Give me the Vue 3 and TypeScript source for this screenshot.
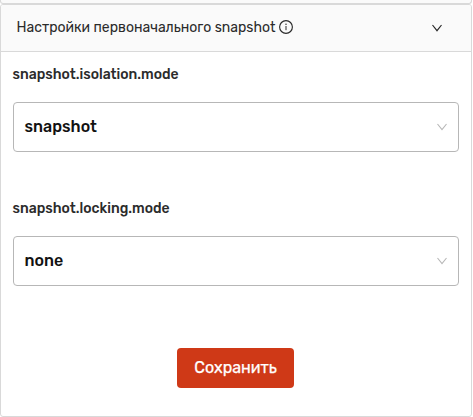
<script setup lang="ts">
import { reactive, ref } from 'vue'

interface Setting {
  key: string
  value: string
}

const open = ref(true)
const settings = reactive<Setting[]>([
  { key: 'snapshot.isolation.mode', value: 'snapshot' },
  { key: 'snapshot.locking.mode', value: 'none' },
])
</script>

<template>
  <div class="collapse">
    <div class="previous"></div>
    <section class="panel">
      <header class="header" @click="open = !open">
        <span class="title">Настройки первоначального snapshot</span>
        <svg class="info" viewBox="0 0 14 14" fill="none" stroke="currentColor">
          <circle cx="7" cy="7" r="6.4" stroke-width="1.15" />
          <path d="M7 6V10.2" stroke-width="1" />
          <circle cx="7" cy="4.2" r="0.75" fill="currentColor" stroke="none" />
        </svg>
        <svg class="arrow" viewBox="0 0 10 8" fill="none" stroke="currentColor">
          <path d="M0.5 1L5 6.7L9.5 1" stroke-width="1.2" />
        </svg>
      </header>
      <div v-if="open" class="body">
        <div v-for="s in settings" :key="s.key" class="field">
          <div class="label">{{ s.key }}</div>
          <div class="select">
            <span class="value">{{ s.value }}</span>
            <svg class="caret" viewBox="0 0 10 8" fill="none" stroke="currentColor">
              <path d="M0.5 1L5 6.7L9.5 1" stroke-width="1.1" />
            </svg>
          </div>
        </div>
        <button class="save" type="button">Сохранить</button>
      </div>
    </section>
  </div>
</template>

<style>
body {
  background: #fff;
}
</style>

<style scoped>
.collapse {
  box-sizing: border-box;
  width: 472px;
  height: 417px;
  display: flex;
  flex-direction: column;
  font-family: Rubik, Roboto, sans-serif;
  color: #2b2b2b;
}
.previous {
  box-sizing: border-box;
  flex: none;
  height: 4px;
  background: #fafafa;
  border: 1px solid #d9d9d9;
  border-top: 0;
  border-radius: 0 0 3px 3px;
}
.panel {
  box-sizing: border-box;
  flex: 1;
  border: 1px solid #d9d9d9;
  border-radius: 3px;
  overflow: hidden;
}
.header {
  box-sizing: border-box;
  height: 47px;
  display: flex;
  align-items: center;
  padding: 0 29px 0 15.6px;
  background: #fafafa;
  border-bottom: 1px solid #d9d9d9;
  font-size: 14px;
  line-height: 22px;
  cursor: pointer;
}
.title {
  white-space: nowrap;
}
.info {
  width: 14px;
  height: 14px;
  margin: 0 0 2px 3.6px;
}
.arrow {
  width: 10px;
  height: 8px;
  margin-left: auto;
}
.body {
  display: flex;
  flex-direction: column;
  padding: 12px 12px 0;
}
.field {
  height: 134px;
}
.label {
  height: 22px;
  margin: 0 0 16px -0.5px;
  font-size: 14px;
  line-height: 22px;
  font-weight: 500;
}
.select {
  box-sizing: border-box;
  height: 50px;
  display: flex;
  align-items: center;
  justify-content: space-between;
  padding: 0 11px 0 10.6px;
  border: 1px solid #b7b7b7;
  border-radius: 4px;
}
.value {
  font-size: 16px;
  line-height: 24px;
  font-weight: 500;
  color: #111;
}
.caret {
  width: 10px;
  height: 8px;
  color: #b7b7b7;
}
.save {
  align-self: center;
  width: 117px;
  height: 40px;
  margin: 16px 1px 0 0;
  padding: 0 0 1px;
  border: 0;
  border-radius: 4px;
  background: #cf3917;
  color: #fff;
  font-family: inherit;
  font-size: 16px;
  -webkit-text-stroke: 0.25px #fff;
  white-space: nowrap;
}
</style>
